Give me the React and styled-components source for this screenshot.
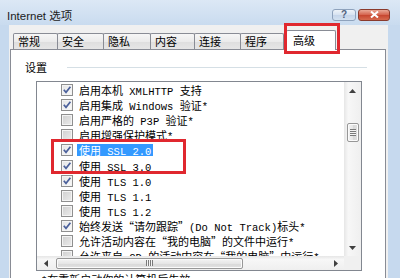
import React from 'react'
import styled, { createGlobalStyle } from 'styled-components'

const GlobalStyle = createGlobalStyle`
  html, body { margin: 0; padding: 0; }
  body { width: 400px; height: 278px; overflow: hidden; background: #c6d9ee; }
`

const CJK = `"Noto Sans CJK SC", sans-serif`

const Window = styled.div`
  width: 400px;
  height: 278px;
  overflow: hidden;
  display: flex;
  flex-direction: column;
  background: #c6d9ee;
  font-family: ${CJK};
`

const TitleBar = styled.div`
  height: 25px;
  box-sizing: border-box;
  padding: 4px 10px 0 7px;
  display: flex;
  align-items: center;
  flex-shrink: 0;
  background: linear-gradient(#dce8f5, #c9dbef);
`

const Title = styled.div`
  flex: 1;
  font: 11.5px "Liberation Sans", "Noto Sans CJK SC", sans-serif;
  color: #1b1b1b;
`

const CaptionButton = styled.div`
  width: ${p => p.$w}px;
  height: 12px;
  box-sizing: border-box;
  margin-left: 2px;
  border-radius: 3px;
  border: 1px solid ${p => (p.$close ? '#8a3a2c' : '#8ea2bc')};
  background: ${p =>
    p.$close
      ? 'linear-gradient(#e9a896, #d4614b 50%, #c6452f 51%, #d66a4e)'
      : 'linear-gradient(#eef3f9, #d6e2f0 50%, #c5d5ea 51%, #d3e1f0)'};
  display: flex;
  align-items: center;
  justify-content: center;
  font: bold 10px "Liberation Sans", sans-serif;
  color: #51637f;
`

const Client = styled.div`
  flex: 1;
  min-height: 0;
  margin: 0 12px 0 9px;
  padding: 5px 2px 0 1px;
  background: #f0f0f0;
  display: flex;
  flex-direction: column;
`

const TabRow = styled.div`
  display: flex;
  align-items: flex-end;
  height: 19px;
  padding-left: 3px;
  flex-shrink: 0;
  position: relative;
  z-index: 1;
`

const Tab = styled.div`
  position: relative;
  box-sizing: border-box;
  width: ${p => p.$w}px;
  height: ${p => (p.$active ? 20 : 16)}px;
  margin: ${p => (p.$active ? '0 0 -1px 3px' : '0 -1px 0 0')};
  padding: ${p => (p.$active ? '1px 0 0 6px' : '0 0 0 4px')};
  border: 1px solid #898c95;
  border-bottom: none;
  border-radius: 2px 2px 0 0;
  background: ${p => (p.$active ? '#fff' : 'linear-gradient(#f6f6f6, #ebebeb 50%, #dedede 51%, #e6e6e6)')};
  font-size: 11px;
  line-height: ${p => (p.$active ? 17 : 15)}px;
  color: #000;

  &::after {
    content: '';
    display: ${p => (p.$marked ? 'block' : 'none')};
    position: absolute;
    left: -3px;
    right: -5px;
    top: -8px;
    bottom: -4px;
    border: 3px solid #e0282f;
  }
`

const Panel = styled.div`
  flex: 1;
  min-height: 0;
  background: #fff;
  border: 1px solid #898c95;
  border-bottom: none;
  padding: 10px 18px 0 14px;
  display: flex;
  flex-direction: column;
`

const GroupHeader = styled.div`
  display: flex;
  align-items: center;
  height: 14px;
  font-size: 11px;
  line-height: 14px;
  color: #000;
  flex-shrink: 0;
`

const GroupLine = styled.div`
  flex: 1;
  height: 1px;
  margin-left: 20px;
  background: #d5dfe5;
`

const ListBox = styled.div`
  margin: 7px 5px 0 11px;
  height: 190px;
  flex-shrink: 0;
  box-sizing: border-box;
  border: 1px solid #828790;
  display: grid;
  grid-template-columns: 1fr 17px;
  grid-template-rows: 1fr 14px;
`

const Rows = styled.div`
  grid-row: 1;
  grid-column: 1;
  overflow: hidden;
  padding-top: 0.5px;
  min-height: 0;
`

const Row = styled.div`
  height: 15.1px;
  display: flex;
  align-items: center;
  gap: 6px;
  padding-left: 24px;
  white-space: nowrap;
`

const Marked = styled.div`
  position: relative;

  &::after {
    content: '';
    position: absolute;
    left: 14px;
    width: 135px;
    top: -4px;
    bottom: -1px;
    box-sizing: border-box;
    border: 3px solid #e0282f;
  }
`

const Box = styled.span`
  width: 12px;
  height: 12px;
  box-sizing: border-box;
  flex-shrink: 0;
  border: 1px solid #8f8f8f;
  box-shadow: inset 0 0 0 1px #f4f4f4;
  background: ${p => (p.$on ? 'linear-gradient(135deg, #e4e4e4, #fbfbfb)' : 'linear-gradient(135deg, #cfcfcf, #ececec)')};
  display: flex;
  align-items: center;
  justify-content: center;
`

const Label = styled.span`
  display: inline-block;
  height: 12px;
  line-height: 12px;
  font-size: 11px;
  color: ${p => (p.$selected ? '#fff' : '#000')};
  background: ${p => (p.$selected ? '#3399ff' : 'transparent')};
  padding: ${p => (p.$selected ? '0 2px' : '0')};
  margin-left: ${p => (p.$selected ? '-2px' : '0')};
`

const Latin = styled.span`
  font-family: "Liberation Mono", monospace;
  font-size: 10.5px;
`

const VScroll = styled.div`
  grid-row: 1;
  grid-column: 2;
  background: linear-gradient(90deg, #e6e6e6, #f7f7f7 25%, #efefef);
  display: flex;
  flex-direction: column;
  align-items: center;
  min-height: 0;
`

const HScroll = styled.div`
  grid-row: 2;
  grid-column: 1;
  background: linear-gradient(#e6e6e6, #f7f7f7 25%, #efefef);
  display: flex;
  align-items: center;
`

const Corner = styled.div`
  grid-row: 2;
  grid-column: 2;
  background: #f0f0f0;
`

const ArrowBtn = styled.div`
  width: 17px;
  height: ${p => (p.$h ? 14 : 17)}px;
  flex-shrink: 0;
  display: flex;
  align-items: center;
  justify-content: center;
`

const Spacer = styled.div`
  flex: 1;
`

const Thumb = styled.div`
  box-sizing: border-box;
  flex-shrink: 0;
  width: ${p => (p.$h ? '187px' : '12px')};
  height: ${p => (p.$h ? '11px' : '19px')};
  margin: ${p => (p.$h ? '0 0 0 2px' : '24px 0 0')};
  border: 1px solid #979797;
  border-radius: 2px;
  box-shadow: inset 0 0 0 1px #fbfbfb;
  background: linear-gradient(${p => (p.$h ? '180deg' : '90deg')}, #f4f4f4, #e6e6e6 50%, #d8d8d8 51%, #e2e2e2);
  display: flex;
  align-items: center;
  justify-content: center;
`

const Grip = styled.div`
  width: ${p => (p.$h ? '7px' : '6px')};
  height: ${p => (p.$h ? '6px' : '7px')};
  background: repeating-linear-gradient(
    ${p => (p.$h ? '90deg' : '180deg')},
    #7a7a7a 0 1px,
    #f4f4f4 1px 2px
  );
`

const Footer = styled.div`
  margin: 1px 0 0 16px;
  font-size: 11px;
  line-height: 14px;
  color: #000;
  white-space: nowrap;
`

const Arrow = ({ dir }) => {
  const pts = {
    up: '0,4 3.5,0 7,4',
    down: '0,0 3.5,4 7,0',
    left: '4,0 0,3.5 4,7',
    right: '0,0 4,3.5 0,7',
  }[dir]
  const vertical = dir === 'up' || dir === 'down'
  return (
    <svg width={vertical ? 7 : 4} height={vertical ? 4 : 7}>
      <polygon points={pts} fill="#404040" />
    </svg>
  )
}

const Check = () => (
  <svg width="10" height="10" viewBox="0 0 10 10">
    <path d="M1.8 4.8 L4 7.4 L8.4 1.8" stroke="#4b609b" strokeWidth="1.7" fill="none" />
  </svg>
)

const withLatin = text =>
  text.split(/([\x20-\x7e]+)/).map((part, i) => (i % 2 ? <Latin key={i}>{part}</Latin> : part))

const tabs = [
  { name: '常规', w: 45 },
  { name: '安全', w: 47 },
  { name: '隐私', w: 48 },
  { name: '内容', w: 45 },
  { name: '连接', w: 47 },
  { name: '程序', w: 44 },
  { name: '高级', w: 50, active: true },
]

const settings = [
  { text: '启用本机 XMLHTTP 支持', on: true },
  { text: '启用集成 Windows 验证*', on: true },
  { text: '启用严格的 P3P 验证*', on: false },
  { text: '启用增强保护模式*', on: false },
  { text: '使用 SSL 2.0', on: true, selected: true, marked: true },
  { text: '使用 SSL 3.0', on: true, marked: true },
  { text: '使用 TLS 1.0', on: true },
  { text: '使用 TLS 1.1', on: false },
  { text: '使用 TLS 1.2', on: false },
  { text: '始终发送“请勿跟踪”(Do Not Track)标头*', on: true },
  { text: '允许活动内容在“我的电脑”的文件中运行*', on: false },
  { text: '允许来自 CD 的活动内容在“我的电脑”中运行*', on: false },
]

const SettingRow = ({ item }) => (
  <Row>
    <Box $on={item.on}>{item.on && <Check />}</Box>
    <Label $selected={item.selected}>{withLatin(item.text)}</Label>
  </Row>
)

const App = () => {
  const before = settings.slice(0, 4)
  const marked = settings.filter(s => s.marked)
  const after = settings.slice(6)

  return (
    <Window>
      <GlobalStyle />
      <TitleBar>
        <Title>Internet 选项</Title>
        <CaptionButton $w={24}>?</CaptionButton>
        <CaptionButton $w={32} $close>
          <svg width="9" height="7" viewBox="0 0 9 7">
            <path d="M1 0.5 L8 6.5 M8 0.5 L1 6.5" stroke="#fff" strokeWidth="2" />
          </svg>
        </CaptionButton>
      </TitleBar>
      <Client>
        <TabRow>
          {tabs.map(t => (
            <Tab key={t.name} $w={t.w} $active={t.active} $marked={t.active}>
              {t.name}
            </Tab>
          ))}
        </TabRow>
        <Panel>
          <GroupHeader>
            设置
            <GroupLine />
          </GroupHeader>
          <ListBox>
            <Rows>
              {before.map(s => (
                <SettingRow key={s.text} item={s} />
              ))}
              <Marked>
                {marked.map(s => (
                  <SettingRow key={s.text} item={s} />
                ))}
              </Marked>
              {after.map(s => (
                <SettingRow key={s.text} item={s} />
              ))}
            </Rows>
            <VScroll>
              <ArrowBtn>
                <Arrow dir="up" />
              </ArrowBtn>
              <Thumb>
                <Grip />
              </Thumb>
              <Spacer />
              <ArrowBtn>
                <Arrow dir="down" />
              </ArrowBtn>
            </VScroll>
            <HScroll>
              <ArrowBtn $h>
                <Arrow dir="left" />
              </ArrowBtn>
              <Thumb $h>
                <Grip $h />
              </Thumb>
              <Spacer />
              <ArrowBtn $h>
                <Arrow dir="right" />
              </ArrowBtn>
            </HScroll>
            <Corner />
          </ListBox>
          <Footer>{withLatin('*在重新启动你的计算机后生效')}</Footer>
        </Panel>
      </Client>
    </Window>
  )
}

export default App
